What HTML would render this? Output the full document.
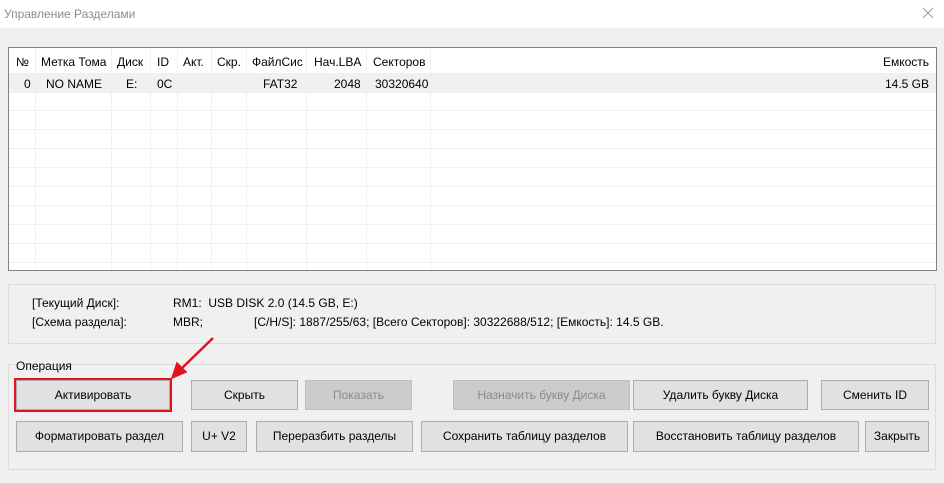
<!DOCTYPE html><html><head><meta charset="utf-8"><style>
body{margin:0;width:944px;height:483px;overflow:hidden;background:#f0f0f0;font-family:"Liberation Sans","Noto Sans CJK SC",sans-serif;font-size:12px;color:#000;position:relative}
.a{position:absolute}
.title{left:0;top:0;width:944px;height:28px;background:#fff;border-bottom:1px solid #f0f0f0}
.tbl{left:8px;top:47px;width:927px;height:222px;background:#fff;border:1px solid #828282}
.vl{position:absolute;top:0;width:1px;height:222px;background:#f0f0f0}
.hl{position:absolute;left:0;width:927px;height:1px;background:#f0f0f0}
.t{position:absolute;white-space:nowrap}
.btn{position:absolute;background:#e1e1e1;border:1px solid #adadad;box-sizing:border-box;text-align:center;line-height:29px;white-space:nowrap}
.dis{background:#cccccc;border-color:#bfbfbf;color:#8a8a8a}
.grp{position:absolute;border:1px solid #dcdcdc;box-sizing:border-box}
</style></head><body>
<div class="a title"></div>
<div class="t" style="left:4px;top:7px;color:#8c8c8c">Управление Разделами</div>
<svg class="a" style="left:922px;top:7px" width="12" height="12"><path d="M1 1L11 11M11 1L1 11" stroke="#999" stroke-width="1"/></svg>
<div class="a tbl">
<div class="hl" style="top:25px;height:20px;background:#f0f0f0"></div>
<div class="hl" style="top:62px"></div><div class="hl" style="top:81px"></div><div class="hl" style="top:100px"></div><div class="hl" style="top:119px"></div><div class="hl" style="top:138px"></div><div class="hl" style="top:157px"></div><div class="hl" style="top:176px"></div><div class="hl" style="top:195px"></div><div class="hl" style="top:214px"></div>
<div class="vl" style="left:26px"></div><div class="vl" style="left:102px"></div><div class="vl" style="left:141px"></div><div class="vl" style="left:168px"></div><div class="vl" style="left:202px"></div><div class="vl" style="left:237px"></div><div class="vl" style="left:297px"></div><div class="vl" style="left:357px"></div><div class="vl" style="left:421px"></div>
<div class="t" style="left:7px;top:7px">№</div>
<div class="t" style="left:32px;top:7px">Метка Тома</div>
<div class="t" style="left:108px;top:7px">Диск</div>
<div class="t" style="left:148px;top:7px">ID</div>
<div class="t" style="left:174px;top:7px">Акт.</div>
<div class="t" style="left:208px;top:7px">Скр.</div>
<div class="t" style="left:243px;top:7px">ФайлСис</div>
<div class="t" style="left:305px;top:7px">Нач.LBA</div>
<div class="t" style="left:364px;top:7px">Секторов</div>
<div class="t" style="right:7px;top:7px">Емкость</div>
<div class="t" style="left:15px;top:29px">0</div>
<div class="t" style="left:37px;top:29px">NO NAME</div>
<div class="t" style="left:117px;top:29px">E:</div>
<div class="t" style="left:148px;top:29px">0C</div>
<div class="t" style="left:254px;top:29px">FAT32</div>
<div class="t" style="left:325px;top:29px">2048</div>
<div class="t" style="left:366px;top:29px">30320640</div>
<div class="t" style="right:7px;top:29px">14.5 GB</div>
</div>
<div class="grp" style="left:8px;top:284px;width:928px;height:60px"></div>
<div class="t" style="left:32px;top:296px">[Текущий Диск]:</div>
<div class="t" style="left:173px;top:296px">RM1:&nbsp; USB DISK 2.0 (14.5 GB, E:)</div>
<div class="t" style="left:32px;top:315px">[Схема раздела]:</div>
<div class="t" style="left:173px;top:315px">MBR;</div>
<div class="t" style="left:254px;top:315px">[C/H/S]: 1887/255/63; [Всего Секторов]: 30322688/512; [Емкость]: 14.5 GB.</div>
<div class="grp" style="left:8px;top:364px;width:928px;height:106px"></div>
<div class="t" style="left:16px;top:359px">Операция</div>
<div class="btn" style="left:16px;top:380px;width:154px;height:30px">Активировать</div>
<div class="a" style="left:14px;top:378px;width:154px;height:30px;border:2px solid #e0141e"></div>
<div class="btn" style="left:191px;top:380px;width:107px;height:30px">Скрыть</div>
<div class="btn dis" style="left:305px;top:380px;width:107px;height:30px">Показать</div>
<div class="btn dis" style="left:453px;top:380px;width:177px;height:30px">Назначить букву Диска</div>
<div class="btn" style="left:633px;top:380px;width:175px;height:30px">Удалить букву Диска</div>
<div class="btn" style="left:821px;top:380px;width:108px;height:30px">Сменить ID</div>
<div class="btn" style="left:16px;top:421px;width:167px;height:31px">Форматировать раздел</div>
<div class="btn" style="left:191px;top:421px;width:56px;height:31px">U+ V2</div>
<div class="btn" style="left:256px;top:421px;width:157px;height:31px">Переразбить разделы</div>
<div class="btn" style="left:421px;top:421px;width:207px;height:31px">Сохранить таблицу разделов</div>
<div class="btn" style="left:633px;top:421px;width:226px;height:31px">Восстановить таблицу разделов</div>
<div class="btn" style="left:865px;top:421px;width:64px;height:31px">Закрыть</div>
<svg class="a" style="left:0;top:0" width="944" height="483"><path d="M213 338L180 370" stroke="#e0141e" stroke-width="2.5"/><path d="M172 378L177 363L186 372Z" fill="#e0141e" stroke="#e0141e" stroke-width="1.5"/></svg>
</body></html>
